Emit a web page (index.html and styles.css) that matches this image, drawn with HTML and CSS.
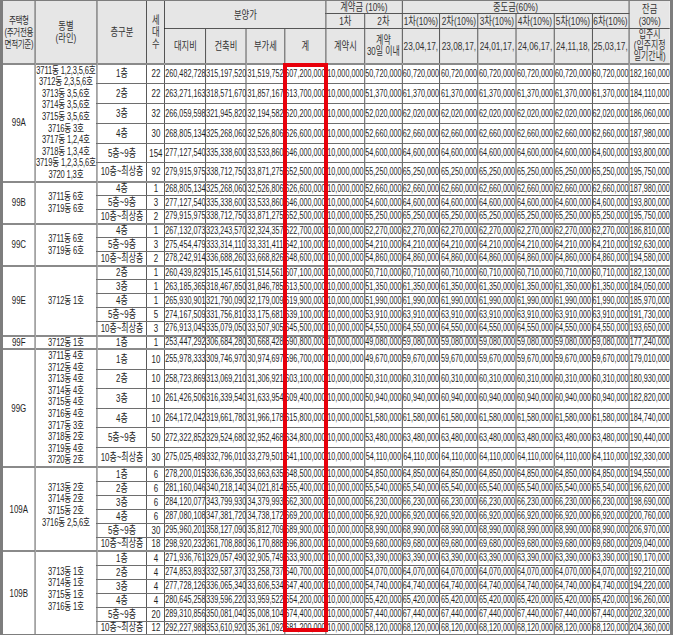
FILE: index.html
```html
<!DOCTYPE html>
<html lang="ko">
<head>
<meta charset="utf-8">
<title>분양가 및 납부일정</title>
<link rel="stylesheet" href="styles.css">
</head>
<body>
<div class="sheet">
<div class="scale">
<table class="price">
<colgroup>
<col class="c1"><col class="c2"><col class="c3"><col class="c4">
<col class="c5"><col class="c6"><col class="c7"><col class="c8">
<col class="c9"><col class="c10">
<col class="c11"><col class="c11"><col class="c11"><col class="c11"><col class="c11"><col class="c16">
<col class="c17">
</colgroup>
<thead>
<tr class="r1">
<th rowspan="3" class="tight">주택형<br>(주거전용<br>면적기준)</th>
<th rowspan="3">동별<br>(라인)</th>
<th rowspan="3">층구분</th>
<th rowspan="3">세<br>대<br>수</th>
<th colspan="4" rowspan="2">분양가</th>
<th colspan="2">계약금 (10%)</th>
<th colspan="6">중도금(60%)</th>
<th rowspan="2">잔금<br>(30%)</th>
</tr>
<tr class="r2">
<th>1차</th><th>2차</th>
<th>1차(10%)</th><th>2차(10%)</th><th>3차(10%)</th><th>4차(10%)</th><th>5차(10%)</th><th>6차(10%)</th>
</tr>
<tr class="r3">
<th>대지비</th><th>건축비</th><th>부가세</th><th>계</th>
<th>계약시</th><th class="small">계약<br>30일 이내</th>
<th>23,04,17,</th><th>23,08,17,</th><th>24,01,17,</th><th>24,06,17,</th><th>24,11,18,</th><th>25,03,17,</th>
<th class="small">입주시<br>(입주지정<br>일기간내)</th>
</tr>
</thead>
<tbody>
<!-- 99A -->
<tr class="h20 g"><td rowspan="6">99A</td><td rowspan="6" class="dong">3711동 1,2,3,5,6호<br>3712동 2,3,5,6호<br>3713동 3,5,6호<br>3714동 3,5,6호<br>3715동 3,5,6호<br>3716동 3호<br>3717동 1,2,4호<br>3718동 1,3,4호<br>3719동 1,2,3,5,6호<br>3720 1,3호</td><td>1층</td><td>22</td><td>260,482,728</td><td>315,197,520</td><td>31,519,752</td><td>607,200,000</td><td>10,000,000</td><td>50,720,000</td><td>60,720,000</td><td>60,720,000</td><td>60,720,000</td><td>60,720,000</td><td>60,720,000</td><td>60,720,000</td><td>182,160,000</td></tr>
<tr class="h20"><td>2층</td><td>22</td><td>263,271,163</td><td>318,571,670</td><td>31,857,167</td><td>613,700,000</td><td>10,000,000</td><td>51,370,000</td><td>61,370,000</td><td>61,370,000</td><td>61,370,000</td><td>61,370,000</td><td>61,370,000</td><td>61,370,000</td><td>184,110,000</td></tr>
<tr class="h20"><td>3층</td><td>32</td><td>266,059,598</td><td>321,945,820</td><td>32,194,582</td><td>620,200,000</td><td>10,000,000</td><td>52,020,000</td><td>62,020,000</td><td>62,020,000</td><td>62,020,000</td><td>62,020,000</td><td>62,020,000</td><td>62,020,000</td><td>186,060,000</td></tr>
<tr class="h20"><td>4층</td><td>30</td><td>268,805,134</td><td>325,268,060</td><td>32,526,806</td><td>626,600,000</td><td>10,000,000</td><td>52,660,000</td><td>62,660,000</td><td>62,660,000</td><td>62,660,000</td><td>62,660,000</td><td>62,660,000</td><td>62,660,000</td><td>187,980,000</td></tr>
<tr class="h19"><td>5층~9층</td><td>154</td><td>277,127,540</td><td>335,338,600</td><td>33,533,860</td><td>646,000,000</td><td>10,000,000</td><td>54,600,000</td><td>64,600,000</td><td>64,600,000</td><td>64,600,000</td><td>64,600,000</td><td>64,600,000</td><td>64,600,000</td><td>193,800,000</td></tr>
<tr class="h19"><td>10층~최상층</td><td>92</td><td>279,915,975</td><td>338,712,750</td><td>33,871,275</td><td>652,500,000</td><td>10,000,000</td><td>55,250,000</td><td>65,250,000</td><td>65,250,000</td><td>65,250,000</td><td>65,250,000</td><td>65,250,000</td><td>65,250,000</td><td>195,750,000</td></tr>
<!-- 99B -->
<tr class="h14 g"><td rowspan="3">99B</td><td rowspan="3" class="dong">3711동 6호<br>3719동 6호</td><td>4층</td><td>1</td><td>268,805,134</td><td>325,268,060</td><td>32,526,806</td><td>626,600,000</td><td>10,000,000</td><td>52,660,000</td><td>62,660,000</td><td>62,660,000</td><td>62,660,000</td><td>62,660,000</td><td>62,660,000</td><td>62,660,000</td><td>187,980,000</td></tr>
<tr class="h14"><td>5층~9층</td><td>3</td><td>277,127,540</td><td>335,338,600</td><td>33,533,860</td><td>646,000,000</td><td>10,000,000</td><td>54,600,000</td><td>64,600,000</td><td>64,600,000</td><td>64,600,000</td><td>64,600,000</td><td>64,600,000</td><td>64,600,000</td><td>193,800,000</td></tr>
<tr class="h14"><td>10층~최상층</td><td>2</td><td>279,915,975</td><td>338,712,750</td><td>33,871,275</td><td>652,500,000</td><td>10,000,000</td><td>55,250,000</td><td>65,250,000</td><td>65,250,000</td><td>65,250,000</td><td>65,250,000</td><td>65,250,000</td><td>65,250,000</td><td>195,750,000</td></tr>
<!-- 99C -->
<tr class="h14 g"><td rowspan="3">99C</td><td rowspan="3" class="dong">3711동 6호<br>3719동 6호</td><td>4층</td><td>1</td><td>267,132,073</td><td>323,243,570</td><td>32,324,357</td><td>622,700,000</td><td>10,000,000</td><td>52,270,000</td><td>62,270,000</td><td>62,270,000</td><td>62,270,000</td><td>62,270,000</td><td>62,270,000</td><td>62,270,000</td><td>186,810,000</td></tr>
<tr class="h14"><td>5층~9층</td><td>3</td><td>275,454,479</td><td>333,314,110</td><td>33,331,411</td><td>642,100,000</td><td>10,000,000</td><td>54,210,000</td><td>64,210,000</td><td>64,210,000</td><td>64,210,000</td><td>64,210,000</td><td>64,210,000</td><td>64,210,000</td><td>192,630,000</td></tr>
<tr class="h14"><td>10층~최상층</td><td>2</td><td>278,242,914</td><td>336,688,260</td><td>33,668,826</td><td>648,600,000</td><td>10,000,000</td><td>54,860,000</td><td>64,860,000</td><td>64,860,000</td><td>64,860,000</td><td>64,860,000</td><td>64,860,000</td><td>64,860,000</td><td>194,580,000</td></tr>
<!-- 99E -->
<tr class="h14 g"><td rowspan="5">99E</td><td rowspan="5" class="dong">3712동 1호</td><td>2층</td><td>1</td><td>260,439,829</td><td>315,145,610</td><td>31,514,561</td><td>607,100,000</td><td>10,000,000</td><td>50,710,000</td><td>60,710,000</td><td>60,710,000</td><td>60,710,000</td><td>60,710,000</td><td>60,710,000</td><td>60,710,000</td><td>182,130,000</td></tr>
<tr class="h14"><td>3층</td><td>1</td><td>263,185,365</td><td>318,467,850</td><td>31,846,785</td><td>613,500,000</td><td>10,000,000</td><td>51,350,000</td><td>61,350,000</td><td>61,350,000</td><td>61,350,000</td><td>61,350,000</td><td>61,350,000</td><td>61,350,000</td><td>184,050,000</td></tr>
<tr class="h14"><td>4층</td><td>1</td><td>265,930,901</td><td>321,790,090</td><td>32,179,009</td><td>619,900,000</td><td>10,000,000</td><td>51,990,000</td><td>61,990,000</td><td>61,990,000</td><td>61,990,000</td><td>61,990,000</td><td>61,990,000</td><td>61,990,000</td><td>185,970,000</td></tr>
<tr class="h14"><td>5층~9층</td><td>5</td><td>274,167,509</td><td>331,756,810</td><td>33,175,681</td><td>639,100,000</td><td>10,000,000</td><td>53,910,000</td><td>63,910,000</td><td>63,910,000</td><td>63,910,000</td><td>63,910,000</td><td>63,910,000</td><td>63,910,000</td><td>191,730,000</td></tr>
<tr class="h14"><td>10층~최상층</td><td>3</td><td>276,913,045</td><td>335,079,050</td><td>33,507,905</td><td>645,500,000</td><td>10,000,000</td><td>54,550,000</td><td>64,550,000</td><td>64,550,000</td><td>64,550,000</td><td>64,550,000</td><td>64,550,000</td><td>64,550,000</td><td>193,650,000</td></tr>
<!-- 99F -->
<tr class="h13 g"><td>99F</td><td class="dong">3712동 1호</td><td>1층</td><td>1</td><td>253,447,292</td><td>306,684,280</td><td>30,668,428</td><td>590,800,000</td><td>10,000,000</td><td>49,080,000</td><td>59,080,000</td><td>59,080,000</td><td>59,080,000</td><td>59,080,000</td><td>59,080,000</td><td>59,080,000</td><td>177,240,000</td></tr>
<!-- 99G -->
<tr class="h20 g"><td rowspan="6">99G</td><td rowspan="6" class="dong">3711동 4호<br>3712동 4호<br>3713동 4호<br>3714동 4호<br>3715동 4호<br>3716동 4호<br>3717동 3호<br>3718동 2호<br>3719동 4호<br>3720동 2호</td><td>1층</td><td>10</td><td>255,978,333</td><td>309,746,970</td><td>30,974,697</td><td>596,700,000</td><td>10,000,000</td><td>49,670,000</td><td>59,670,000</td><td>59,670,000</td><td>59,670,000</td><td>59,670,000</td><td>59,670,000</td><td>59,670,000</td><td>179,010,000</td></tr>
<tr class="h19"><td>2층</td><td>10</td><td>258,723,869</td><td>313,069,210</td><td>31,306,921</td><td>603,100,000</td><td>10,000,000</td><td>50,310,000</td><td>60,310,000</td><td>60,310,000</td><td>60,310,000</td><td>60,310,000</td><td>60,310,000</td><td>60,310,000</td><td>180,930,000</td></tr>
<tr class="h20"><td>3층</td><td>10</td><td>261,426,506</td><td>316,339,540</td><td>31,633,954</td><td>609,400,000</td><td>10,000,000</td><td>50,940,000</td><td>60,940,000</td><td>60,940,000</td><td>60,940,000</td><td>60,940,000</td><td>60,940,000</td><td>60,940,000</td><td>182,820,000</td></tr>
<tr class="h19"><td>4층</td><td>10</td><td>264,172,042</td><td>319,661,780</td><td>31,966,178</td><td>615,800,000</td><td>10,000,000</td><td>51,580,000</td><td>61,580,000</td><td>61,580,000</td><td>61,580,000</td><td>61,580,000</td><td>61,580,000</td><td>61,580,000</td><td>184,740,000</td></tr>
<tr class="h20"><td>5층~9층</td><td>50</td><td>272,322,852</td><td>329,524,680</td><td>32,952,468</td><td>634,800,000</td><td>10,000,000</td><td>53,480,000</td><td>63,480,000</td><td>63,480,000</td><td>63,480,000</td><td>63,480,000</td><td>63,480,000</td><td>63,480,000</td><td>190,440,000</td></tr>
<tr class="h19"><td>10층~최상층</td><td>30</td><td>275,025,489</td><td>332,796,010</td><td>33,279,501</td><td>641,100,000</td><td>10,000,000</td><td>54,110,000</td><td>64,110,000</td><td>64,110,000</td><td>64,110,000</td><td>64,110,000</td><td>64,110,000</td><td>64,110,000</td><td>192,330,000</td></tr>
<!-- 109A -->
<tr class="h14 g"><td rowspan="6">109A</td><td rowspan="6" class="dong up">3713동 2호<br>3714동 2호<br>3715동 2호<br>3716동 2,5,6호</td><td>1층</td><td>6</td><td>278,200,015</td><td>336,636,350</td><td>33,663,635</td><td>648,500,000</td><td>10,000,000</td><td>54,850,000</td><td>64,850,000</td><td>64,850,000</td><td>64,850,000</td><td>64,850,000</td><td>64,850,000</td><td>64,850,000</td><td>194,550,000</td></tr>
<tr class="h14"><td>2층</td><td>6</td><td>281,160,046</td><td>340,218,140</td><td>34,021,814</td><td>655,400,000</td><td>10,000,000</td><td>55,540,000</td><td>65,540,000</td><td>65,540,000</td><td>65,540,000</td><td>65,540,000</td><td>65,540,000</td><td>65,540,000</td><td>196,620,000</td></tr>
<tr class="h14"><td>3층</td><td>6</td><td>284,120,077</td><td>343,799,930</td><td>34,379,993</td><td>662,300,000</td><td>10,000,000</td><td>56,230,000</td><td>66,230,000</td><td>66,230,000</td><td>66,230,000</td><td>66,230,000</td><td>66,230,000</td><td>66,230,000</td><td>198,690,000</td></tr>
<tr class="h14"><td>4층</td><td>6</td><td>287,080,108</td><td>347,381,720</td><td>34,738,172</td><td>669,200,000</td><td>10,000,000</td><td>56,920,000</td><td>66,920,000</td><td>66,920,000</td><td>66,920,000</td><td>66,920,000</td><td>66,920,000</td><td>66,920,000</td><td>200,760,000</td></tr>
<tr class="h14"><td>5층~9층</td><td>30</td><td>295,960,201</td><td>358,127,090</td><td>35,812,709</td><td>689,900,000</td><td>10,000,000</td><td>58,990,000</td><td>68,990,000</td><td>68,990,000</td><td>68,990,000</td><td>68,990,000</td><td>68,990,000</td><td>68,990,000</td><td>206,970,000</td></tr>
<tr class="h14"><td>10층~최상층</td><td>18</td><td>298,920,232</td><td>361,708,880</td><td>36,170,888</td><td>696,800,000</td><td>10,000,000</td><td>59,680,000</td><td>69,680,000</td><td>69,680,000</td><td>69,680,000</td><td>69,680,000</td><td>69,680,000</td><td>69,680,000</td><td>209,040,000</td></tr>
<!-- 109B -->
<tr class="h14 g"><td rowspan="6">109B</td><td rowspan="6" class="dong up">3713동 1호<br>3714동 1호<br>3715동 1호<br>3716동 1호</td><td>1층</td><td>4</td><td>271,936,761</td><td>329,057,490</td><td>32,905,749</td><td>633,900,000</td><td>10,000,000</td><td>53,390,000</td><td>63,390,000</td><td>63,390,000</td><td>63,390,000</td><td>63,390,000</td><td>63,390,000</td><td>63,390,000</td><td>190,170,000</td></tr>
<tr class="h14"><td>2층</td><td>4</td><td>274,853,893</td><td>332,587,370</td><td>33,258,737</td><td>640,700,000</td><td>10,000,000</td><td>54,070,000</td><td>64,070,000</td><td>64,070,000</td><td>64,070,000</td><td>64,070,000</td><td>64,070,000</td><td>64,070,000</td><td>192,210,000</td></tr>
<tr class="h14"><td>3층</td><td>4</td><td>277,728,126</td><td>336,065,340</td><td>33,606,534</td><td>647,400,000</td><td>10,000,000</td><td>54,740,000</td><td>64,740,000</td><td>64,740,000</td><td>64,740,000</td><td>64,740,000</td><td>64,740,000</td><td>64,740,000</td><td>194,220,000</td></tr>
<tr class="h14"><td>4층</td><td>4</td><td>280,645,258</td><td>339,596,220</td><td>33,959,522</td><td>654,200,000</td><td>10,000,000</td><td>55,420,000</td><td>65,420,000</td><td>65,420,000</td><td>65,420,000</td><td>65,420,000</td><td>65,420,000</td><td>65,420,000</td><td>196,260,000</td></tr>
<tr class="h14"><td>5층~9층</td><td>20</td><td>289,310,856</td><td>350,081,040</td><td>35,008,104</td><td>674,400,000</td><td>10,000,000</td><td>57,440,000</td><td>67,440,000</td><td>67,440,000</td><td>67,440,000</td><td>67,440,000</td><td>67,440,000</td><td>67,440,000</td><td>202,320,000</td></tr>
<tr class="h13"><td>10층~최상층</td><td>12</td><td>292,227,988</td><td>353,610,920</td><td>35,361,092</td><td>681,200,000</td><td>10,000,000</td><td>58,120,000</td><td>68,120,000</td><td>68,120,000</td><td>68,120,000</td><td>68,120,000</td><td>68,120,000</td><td>68,120,000</td><td>204,360,000</td></tr>
</tbody>
</table>
</div>
<div class="highlight"></div>
</div>
</body>
</html>
```
FILE: styles.css
```css
html, body {
  margin: 0;
  padding: 0;
  background: #ffffff;
}

.sheet {
  position: relative;
  width: 667px;
  border: 3px solid #7d7d7d;
  border-top: 1px solid #7d7d7d;
  overflow: hidden;
  background: #ffffff;
}

.scale {
  width: 926.4px;
  transform: scaleX(0.72);
  transform-origin: 0 0;
}

.price {
  width: 100%;
  border-collapse: collapse;
  border-style: hidden;
  table-layout: fixed;
  font-family: "Liberation Sans", "Noto Sans CJK KR", sans-serif;
  font-size: 10px;
  line-height: 1;
  color: #1e1e1e;
}

.c1 { width: 44.4px; }
.c2 { width: 86.1px; }
.c3 { width: 69.4px; }
.c4 { width: 25px; }
.c5 { width: 56.9px; }
.c6 { width: 55.6px; }
.c7 { width: 54.2px; }
.c8 { width: 56.9px; }
.c9 { width: 54.2px; }
.c10 { width: 51.4px; }
.c11 { width: 52.8px; }
.c16 { width: 51.4px; }
.c17 { width: 56.9px; }

.price th,
.price td {
  padding: 0;
  text-align: center;
  vertical-align: middle;
  white-space: nowrap;
  border-left: 1px solid #1a1a1a;
  border-right: 1px solid #1a1a1a;
}

.price th {
  background: #e6e6e6;
  font-weight: normal;
  font-size: 11.5px;
  line-height: 12px;
  color: #333333;
  border-top: 1px solid #555555;
  border-bottom: 1px solid #555555;
}

.price th.tight {
  font-size: 10.5px;
  line-height: 12px;
  letter-spacing: -0.5px;
}

.price th.small {
  font-size: 11px;
  line-height: 11px;
}

.r1 { height: 12px; }
.r2 { height: 15px; }
.r3 { height: 35px; }

.r3 th {
  border-bottom: 2px solid #8a8a8a;
}

.price td {
  border-top: 1px solid #6e6e6e;
  border-bottom: 1px solid #6e6e6e;
}

.price tr.g td {
  border-top: 2px solid #8a8a8a;
}

.price tr.g > td:first-child {
  font-size: 11px;
}

.price td:nth-last-child(15),
.price td:nth-last-child(14) {
  font-size: 11px;
}

.price td.dong {
  line-height: 11.6px;
  font-size: 10.5px;
  letter-spacing: -0.2px;
}

.price td.up {
  padding-bottom: 8px;
}

.h20 { height: 20px; }
.h19 { height: 19px; }
.h14 { height: 14px; }
.h13 { height: 13px; }

.highlight {
  position: absolute;
  left: 280px;
  top: 62px;
  width: 45px;
  height: 569px;
  box-sizing: border-box;
  border: 4px solid #e8000b;
  pointer-events: none;
}
```
